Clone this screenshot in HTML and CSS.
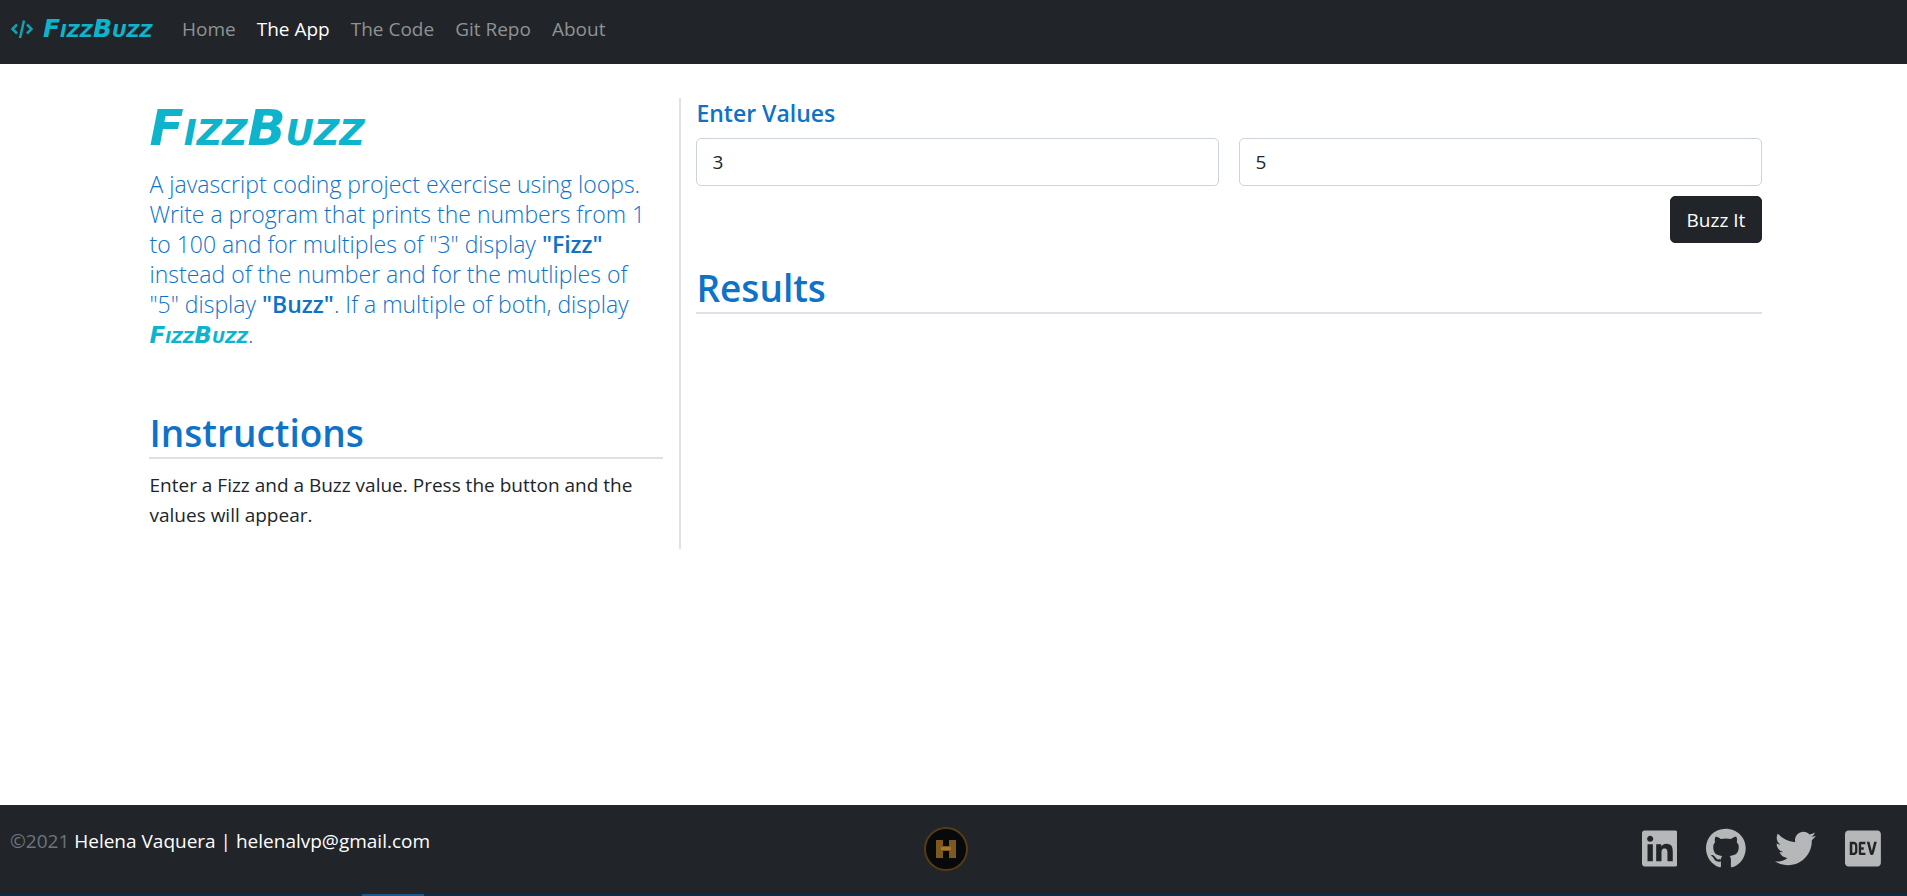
FILE: index.html
```html
<!DOCTYPE html>
<html lang="en">
<head>
<meta charset="utf-8">
<title>FizzBuzz</title>
<link rel="stylesheet" href="styles.css">
</head>
<body>
<nav class="navbar">
  <a class="brand" href="#">
    <svg class="brand-icon" viewBox="0 0 24 20" aria-hidden="true"><path d="M7 5.500 2.500 10 7 14.500M17 5.500l4.500 4.500-4.500 4.500M14 1.500 10 19"/></svg>
    <span class="marker">FizzBuzz</span>
  </a>
  <ul class="nav-list">
    <li><a href="#">Home</a></li>
    <li><a class="active" href="#">The App</a></li>
    <li><a href="#">The Code</a></li>
    <li><a href="#">Git Repo</a></li>
    <li><a href="#">About</a></li>
  </ul>
</nav>
<main class="content">
  <section class="intro">
    <h1 class="title marker">FizzBuzz</h1>
    <p class="lead">A javascript coding project exercise using loops. Write a program that prints the numbers from 1 to 100 and for multiples of "3" display <b>"Fizz"</b> instead of the number and for the mutliples of "5" display <b>"Buzz"</b>. If a multiple of both, display <span class="marker">FizzBuzz</span>.</p>
    <h2 class="heading">Instructions</h2>
    <p class="body-text">Enter a Fizz and a Buzz value. Press the button and the values will appear.</p>
  </section>
  <section class="app">
    <form class="values">
      <h5 class="subheading">Enter Values</h5>
      <div class="fields">
        <input type="text" aria-label="Fizz value" value="3">
        <input type="text" aria-label="Buzz value" value="5">
      </div>
      <button type="button" class="btn">Buzz It</button>
    </form>
    <h2 class="heading">Results</h2>
  </section>
</main>
<footer class="footer">
  <p class="copyright"><span class="muted">©2021</span> Helena Vaquera | helenalvp@gmail.com</p>
  <svg class="logo" viewBox="0 0 46 46" role="img" aria-label="H logo"><circle cx="23" cy="23" r="21" fill="#08090a" stroke="#573d12" stroke-width="2"/><path fill="#7d5a1b" d="M13 14h7v6h6v-6h7v18h-7v-7h-6v7h-7z"/><path fill="#a47a2c" d="M18 21h10v3H18z"/></svg>
  <div class="social">
    <a href="#" aria-label="LinkedIn"><svg viewBox="0 0 448 512"><path d="M416 32H31.900C14.300 32 0 46.500 0 64.300v383.400C0 465.500 14.300 480 31.900 480H416c17.600 0 32-14.500 32-32.300V64.300c0-17.800-14.400-32.300-32-32.300zM135.400 416H69V202.200h66.500V416zm-33.200-243c-21.300 0-38.500-17.300-38.500-38.500S80.900 96 102.200 96c21.200 0 38.500 17.300 38.500 38.500 0 21.300-17.200 38.500-38.500 38.500zm282.100 243h-66.400V312c0-24.800-.5-56.700-34.500-56.700-34.600 0-39.900 27-39.900 54.900V416h-66.400V202.200h63.700v29.200h.9c8.900-16.800 30.600-34.500 62.900-34.500 67.200 0 79.700 44.300 79.700 101.900V416z"/></svg></a>
    <a href="#" aria-label="GitHub"><svg viewBox="0 0 496 512"><path d="M165.900 397.400c0 2-2.300 3.600-5.200 3.600-3.300.3-5.600-1.300-5.600-3.600 0-2 2.300-3.600 5.200-3.600 3-.3 5.600 1.300 5.600 3.600zm-31.100-4.500c-.7 2 1.300 4.300 4.300 4.900 2.600 1 5.600 0 6.200-2s-1.300-4.300-4.300-5.200c-2.600-.7-5.500.3-6.200 2.300zm44.200-1.700c-2.900.7-4.900 2.600-4.600 4.900.3 2 2.900 3.300 5.900 2.600 2.900-.7 4.900-2.600 4.600-4.600-.3-1.900-3-3.200-5.900-2.900zM244.800 8C106.100 8 0 113.300 0 252c0 110.900 69.800 205.800 169.500 239.200 12.800 2.300 17.300-5.600 17.300-12.100 0-6.200-.3-40.400-.3-61.400 0 0-70 15-84.700-29.800 0 0-11.400-29.100-27.800-36.600 0 0-22.900-15.700 1.600-15.400 0 0 24.900 2 38.600 25.800 21.900 38.600 58.600 27.500 72.900 20.900 2.300-16 8.800-27.100 16-33.700-55.900-6.200-112.300-14.300-112.300-110.500 0-27.500 7.600-41.300 23.600-58.900-2.600-6.500-11.100-33.300 2.600-67.900 20.900-6.500 69 27 69 27 20-5.600 41.500-8.500 62.800-8.500s42.800 2.900 62.800 8.500c0 0 48.100-33.600 69-27 13.700 34.700 5.200 61.400 2.600 67.900 16 17.700 25.800 31.500 25.800 58.900 0 96.500-58.900 104.200-114.800 110.500 9.200 7.900 17 22.900 17 46.400 0 33.700-.3 75.400-.3 83.600 0 6.500 4.600 14.400 17.300 12.100C428.200 457.800 496 362.900 496 252 496 113.300 383.500 8 244.800 8z"/></svg></a>
    <a href="#" aria-label="Twitter"><svg viewBox="0 0 512 512"><path d="M459.370 151.716c.325 4.548.325 9.097.325 13.645 0 138.720-105.583 298.558-298.558 298.558-59.452 0-114.680-17.219-161.137-47.106 8.447.974 16.568 1.299 25.340 1.299 49.055 0 94.213-16.568 130.274-44.832-46.132-.975-84.792-31.188-98.112-72.772 6.498.974 12.995 1.624 19.818 1.624 9.421 0 18.843-1.300 27.614-3.573-48.081-9.747-84.143-51.980-84.143-102.985v-1.299c13.969 7.797 30.214 12.670 47.431 13.319-28.264-18.843-46.781-51.005-46.781-87.391 0-19.492 5.197-37.360 14.294-52.954 51.655 63.675 129.300 105.258 216.365 109.807-1.624-7.797-2.599-15.918-2.599-24.040 0-57.828 46.782-104.934 104.934-104.934 30.213 0 57.502 12.670 76.670 33.137 23.715-4.548 46.456-13.320 66.599-25.340-7.798 24.366-24.366 44.833-46.132 57.827 21.117-2.273 41.584-8.122 60.426-16.243-14.292 20.791-32.161 39.308-52.628 54.253z"/></svg></a>
    <a href="#" aria-label="DEV"><svg viewBox="0 0 448 512"><path d="M120.120 208.290c-3.880-2.900-7.770-4.350-11.650-4.350H91.030v104.470h17.450c3.880 0 7.770-1.450 11.650-4.350 3.880-2.900 5.820-7.250 5.820-13.060v-69.650c-.01-5.800-1.960-10.160-5.830-13.060zM404.100 32H43.900C19.700 32 .060 51.590 0 75.800v360.400C.060 460.410 19.700 480 43.900 480h360.200c24.210 0 43.840-19.590 43.900-43.800V75.800c-.060-24.210-19.700-43.800-43.900-43.800zM154.200 291.190c0 18.810-11.610 47.310-48.360 47.250h-46.400V172.980h47.380c35.440 0 47.360 28.460 47.370 47.280l.01 70.930zm100.680-88.660H201.600v38.420h32.570v29.570H201.600v38.410h53.290v29.570h-62.180c-11.160.29-20.440-8.530-20.720-19.690V193.700c-.27-11.150 8.560-20.410 19.710-20.690h63.190l-.01 29.520zm103.640 115.290c-13.200 30.750-36.850 24.630-47.440 0l-38.530-144.800h32.570l29.710 113.720 29.570-113.720h32.580l-38.460 144.800z"/></svg></a>
  </div>
</footer>
<div class="bottom-strip"><span class="strip-tab"></span></div>
</body>
</html>
```
FILE: styles.css
```css
* { box-sizing: border-box; }
body {
  margin: 0;
  min-height: 100vh;
  display: flex;
  flex-direction: column;
  background: #fff;
  color: #212529;
  font-family: "Open Sans", "Noto Sans", sans-serif;
  font-size: 19px;
  line-height: 30px;
}
h1, h2, h5, p, ul { margin: 0; padding: 0; }
a { color: inherit; text-decoration: none; }
.marker {
  font-family: "DejaVu Sans", sans-serif;
  font-weight: 700;
  font-style: italic;
  font-variant: small-caps;
  color: #0db4cc;
}
.navbar {
  display: flex;
  align-items: center;
  gap: 28px;
  min-height: 64px;
  padding: 0 10px 6px;
  background: #212529;
}
.brand { display: flex; align-items: center; gap: 9px; min-width: 144px; font-size: 25px; }
.brand-icon { width: 24px; height: 20px; fill: none; stroke: #14a0b4; stroke-width: 2.5; }
.nav-list { display: flex; gap: 21px; list-style: none; color: #909294; }
.active { color: #fff; }
.content { flex: 1; display: flex; align-items: flex-start; padding: 34px 6.8% 0 7%; }
.intro { flex: 0 0 33.333%; padding: 0 16px 19px; border-right: 2px solid #dee2e6; }
.app { flex: 1; padding: 0 15px; }
.title { font-size: 50px; line-height: 60px; margin-bottom: 11px; }
.lead { padding-right: 10px; font-size: 23px; font-weight: 300; color: #0d72c8; margin-bottom: 60px; }
.lead b { font-weight: 600; }
.lead .marker { line-height: 23px; }
.heading {
  font-size: 37px;
  line-height: 48px;
  font-weight: 600;
  color: #0d72c8;
  border-bottom: 2px solid #dee2e6;
  margin-bottom: 11px;
}
.subheading { font-size: 23px; line-height: 30px; font-weight: 600; color: #0d72c8; margin-bottom: 10px; }
.values { display: flex; flex-direction: column; margin-bottom: 21px; }
.fields { display: flex; gap: 20px; margin-bottom: 10px; }
.fields input {
  flex: 1;
  min-width: 0;
  height: 48px;
  padding: 0 15px;
  border: 1px solid #ced4da;
  border-radius: 5px;
  font: inherit;
  color: inherit;
}
.btn {
  align-self: flex-end;
  height: 47px;
  padding: 0 16px;
  border: 1px solid #212529;
  border-radius: 5px;
  background: #212529;
  color: #fff;
  font: inherit;
}
.footer {
  display: grid;
  grid-template-columns: 1fr auto 1fr;
  align-items: start;
  min-height: 89px;
  padding: 21px 26px 0 10px;
  background: #212529;
  color: #fff;
}
.muted { color: #6c757d; }
.logo { width: 46px; height: 46px; }
.social { display: flex; justify-content: flex-end; align-items: center; gap: 29px; padding-top: 2px; }
.social svg { display: block; height: 41px; fill: #b5b7b9; }
.bottom-strip { height: 2px; padding-left: 19%; background: #0d2c45; }
.strip-tab { display: block; width: 62px; height: 2px; background: #1b5788; }
```
